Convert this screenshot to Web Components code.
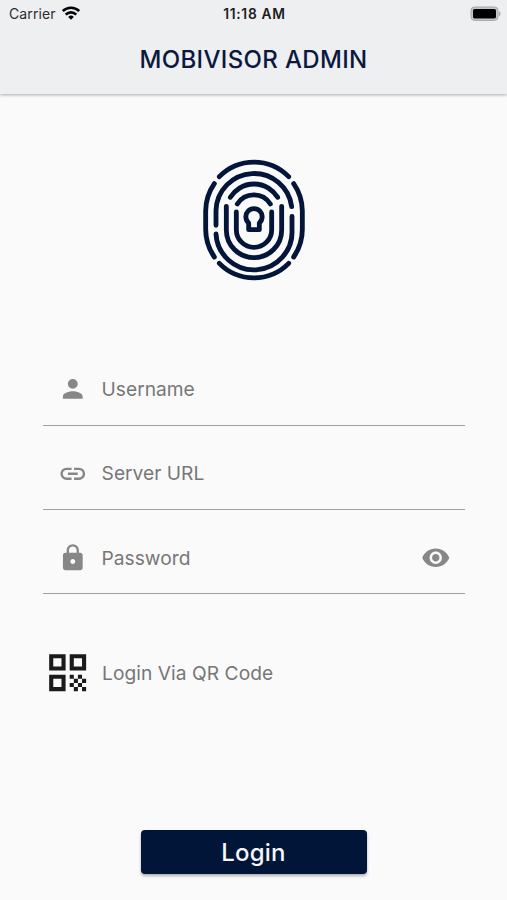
<!DOCTYPE html>
<html lang="en">
<head>
<meta charset="utf-8">
<title>MobiVisor Admin</title>
<style>
    html, body {
        margin: 0;
        height: 100%;
    }
    body {
        font-family: Inter, "Liberation Sans", sans-serif;
        background: #fafafa;
        overflow: hidden;
    }
</style>
</head>
<body>
<login-screen></login-screen>

<script>
// Base class: puts the styles and the markup of an element in its shadow root
class BaseElement extends HTMLElement {
    constructor() {
        super();
        this.attachShadow({ mode: 'open' });
    }

    connectedCallback() {
        this.shadowRoot.innerHTML = `<style>${this.styles()}</style>${this.template()}`;
    }
}

// status-bar: carrier, time and battery
class StatusBar extends BaseElement {
    styles() {
        return `
            :host {
                display: grid;
                grid-template-columns: 1fr auto 1fr;
                align-items: center;
                box-sizing: border-box;
                height: 28px;
                padding: 0 6px 1px 9px;
                font-size: 14px;
                color: #2c2c2e;
            }
            svg { display: block; }
            .carrier { display: flex; align-items: center; gap: 6px; letter-spacing: 0.1px; }
            .carrier svg { margin-top: -1px; }
            .time { font-weight: 600; font-size: 13.8px; letter-spacing: 0.7px; margin-left: -1px; color: #1c1c1e; }
            .battery { justify-self: end; }
        `;
    }

    template() {
        return `
            <div class="carrier">
                <span>Carrier</span>
                <svg width="18" height="14" viewBox="0 0 18 14" fill="none" stroke="#050505" stroke-width="2.6">
                    <path d="M.8 5.1a11.6 11.6 0 0 1 16.4 0"/>
                    <path d="M3.7 8.6a7.5 7.5 0 0 1 10.6 0"/>
                    <path d="M9 13.8l-2.8-2.9a4 4 0 0 1 5.600 0z" fill="#050505" stroke="none"/>
                </svg>
            </div>
            <span class="time">11:18 AM</span>
            <svg class="battery" width="31" height="16" viewBox="0 0 31 16">
                <rect x="1" y="1" width="27" height="13.4" rx="3.6" fill="#c6c7c8" stroke="#a5a6a8"/>
                <rect x="3" y="3" width="23" height="9.4" rx="1.6" fill="#000"/>
                <path d="M29 5.3c2 .8 2 4.2 0 5z" fill="#a5a6a8"/>
            </svg>
        `;
    }
}

// app-header: bar at the top, title in the slot
class AppHeader extends BaseElement {
    styles() {
        return `
            :host {
                display: block;
                height: 94px;
                background: #eeeff1;
                box-shadow: 0 1px 3px rgba(0, 0, 0, 0.32);
            }
            h1 {
                margin: 0;
                height: 64px;
                line-height: 64px;
                text-align: center;
                font-size: 24px;
                font-weight: 450;
                letter-spacing: 0.34px;
                color: #0b1840;
            }
        `;
    }

    template() {
        return `
            <status-bar></status-bar>
            <h1><slot></slot></h1>
        `;
    }
}

// finger-logo: fingerprint with a keyhole in the middle
class FingerLogo extends BaseElement {
    styles() {
        return `
            :host { display: block; width: 120px; height: 140px; }
            svg { display: block; }
        `;
    }

    template() {
        return `
            <svg width="120" height="140" viewBox="0 0 360 420" fill="none" stroke="#03163a" stroke-width="14.5" stroke-linecap="round" stroke-linejoin="round">
                <path d="M76 80A146 146 0 0 1 284 80"/>
                <path d="M61 101A146 146 0 0 0 35 183V238A146 146 0 0 0 61 321"/>
                <path d="M299 101A146 146 0 0 1 325 183V238A146 146 0 0 1 299 321"/>
                <path d="M76 340A146 146 0 0 0 284 340"/>
                <path d="M66 226V181A114 114 0 0 1 293 170"/>
                <path d="M66 252A114 114 0 0 0 294 239V199"/>
                <path d="M109 142A83 83 0 0 1 251 142"/>
                <path d="M97 169V240A83 83 0 0 0 263 240V169"/>
                <path d="M130 162A58.5 58.5 0 0 1 229 162"/>
                <path d="M127 186V239A53 53 0 0 0 233 239V186"/>
                <path d="M164 239V219A24.5 24.5 0 1 1 196 219V239Z"/>
            </svg>
        `;
    }
}

// Icons on a 24 unit grid
const ICONS = {
    person: 'M12 12c2.21 0 4-1.79 4-4s-1.79-4-4-4-4 1.79-4 4 1.79 4 4 4zm0 2c-2.67 0-8 1.34-8 4v2h16v-2c0-2.66-5.33-4-8-4z',
    link: 'M3.9 12c0-1.71 1.39-3.1 3.1-3.1h4V7H7c-2.76 0-5 2.24-5 5s2.24 5 5 5h4v-1.9H7c-1.71 0-3.1-1.39-3.1-3.1zM8 13h8v-2H8v2zm9-6h-4v1.9h4c1.71 0 3.1 1.39 3.1 3.1s-1.39 3.1-3.1 3.1h-4V17h4c2.76 0 5-2.24 5-5s-2.24-5-5-5z',
    lock: 'M18 8h-1V6c0-2.76-2.24-5-5-5S7 3.24 7 6v2H6c-1.1 0-2 .9-2 2v10c0 1.1.9 2 2 2h12c1.1 0 2-.9 2-2V10c0-1.1-.9-2-2-2zm-6 9c-1.1 0-2-.9-2-2s.9-2 2-2 2 .9 2 2-.9 2-2 2zm3.1-9H8.9V6c0-1.71 1.39-3.1 3.1-3.1s3.1 1.39 3.1 3.1v2z',
    eye: 'M12 4.5C7 4.5 2.73 7.61 1 12c1.73 4.39 6 7.5 11 7.5s9.27-3.11 11-7.5c-1.73-4.39-6-7.5-11-7.5zM12 17c-2.76 0-5-2.24-5-5s2.24-5 5-5 5 2.24 5 5-2.24 5-5 5zm0-8c-1.66 0-3 1.34-3 3s1.34 3 3 3 3-1.34 3-3-1.34-3-3-3z',
    qr: 'M3 11h8V3H3v8zm2-6h4v4H5V5zM3 21h8v-8H3v8zm2-6h4v4H5v-4zM13 3v8h8V3h-8zm6 6h-4V5h4v4zM19 19h2v2h-2zM13 13h2v2h-2zM15 15h2v2h-2zM13 17h2v2h-2zM15 19h2v2h-2zM17 17h2v2h-2zM17 13h2v2h-2zM19 15h2v2h-2z'
};

// ui-icon: <ui-icon name="lock" size="30">
class UiIcon extends BaseElement {
    styles() {
        return `
            :host { display: block; flex: none; }
            svg { display: block; fill: currentColor; }
        `;
    }

    template() {
        const size = this.getAttribute('size') || 30;
        return `
            <svg width="${size}" height="${size}" viewBox="0 0 24 24">
                <path d="${ICONS[this.getAttribute('name')]}"/>
            </svg>
        `;
    }
}

// text-field: leading icon, label in the slot, optional trailing icon
class TextField extends BaseElement {
    styles() {
        return `
            :host {
                display: flex;
                align-items: center;
                box-sizing: border-box;
                height: 84.3px;
                padding: 12px 15px 0 14.6px;
                border-bottom: 1px solid #a0a0a0;
                color: #878787;
            }
            .label {
                flex: 1;
                margin-left: 14.4px;
                font-size: 19.2px;
                color: #777;
            }
        `;
    }

    template() {
        const trailing = this.getAttribute('trailing');
        return `
            <ui-icon name="${this.getAttribute('icon')}" size="29.6"></ui-icon>
            <span class="label"><slot></slot></span>
            ${trailing ? `<ui-icon name="${trailing}" size="29.5"></ui-icon>` : ''}
        `;
    }
}

// qr-login: row under the fields
class QrLogin extends BaseElement {
    styles() {
        return `
            :host {
                display: flex;
                align-items: center;
                gap: 9.7px;
                height: 50px;
                font-size: 19.2px;
                letter-spacing: 0.05px;
                color: #777;
            }
            ui-icon { color: #1b1b1b; margin-top: -1px; }
        `;
    }

    template() {
        return `
            <ui-icon name="qr" size="49.3"></ui-icon>
            <span><slot></slot></span>
        `;
    }
}

// raised-button
class RaisedButton extends BaseElement {
    styles() {
        return `
            :host { display: block; width: 226px; height: 44px; }
            button {
                display: block;
                width: 100%;
                height: 100%;
                padding: 0;
                border: 0;
                border-radius: 4px;
                background: #001537;
                color: #f5f7fb;
                font: 500 24px Inter, "Liberation Sans", sans-serif;
                letter-spacing: 0.2px;
                box-shadow: 0 2px 3px rgba(0, 0, 0, 0.3);
            }
        `;
    }

    template() {
        return `<button type="button"><slot></slot></button>`;
    }
}

// login-screen: the whole page
class LoginScreen extends BaseElement {
    styles() {
        return `
            :host {
                display: flex;
                flex-direction: column;
                height: 900px;
                background: #fafafa;
            }
            finger-logo { margin: 56px auto 0; }
            form { margin: 51.5px 42px 0 43px; }
            qr-login { margin: 54px 0 0 43px; }
            raised-button { margin: 132px auto 0; }
        `;
    }

    template() {
        return `
            <app-header>MOBIVISOR ADMIN</app-header>
            <finger-logo></finger-logo>
            <form>
                <text-field icon="person">Username</text-field>
                <text-field icon="link">Server URL</text-field>
                <text-field icon="lock" trailing="eye">Password</text-field>
            </form>
            <qr-login>Login Via QR Code</qr-login>
            <raised-button>Login</raised-button>
        `;
    }
}

customElements.define('ui-icon', UiIcon);
customElements.define('status-bar', StatusBar);
customElements.define('app-header', AppHeader);
customElements.define('finger-logo', FingerLogo);
customElements.define('text-field', TextField);
customElements.define('qr-login', QrLogin);
customElements.define('raised-button', RaisedButton);
customElements.define('login-screen', LoginScreen);
</script>
</body>
</html>
